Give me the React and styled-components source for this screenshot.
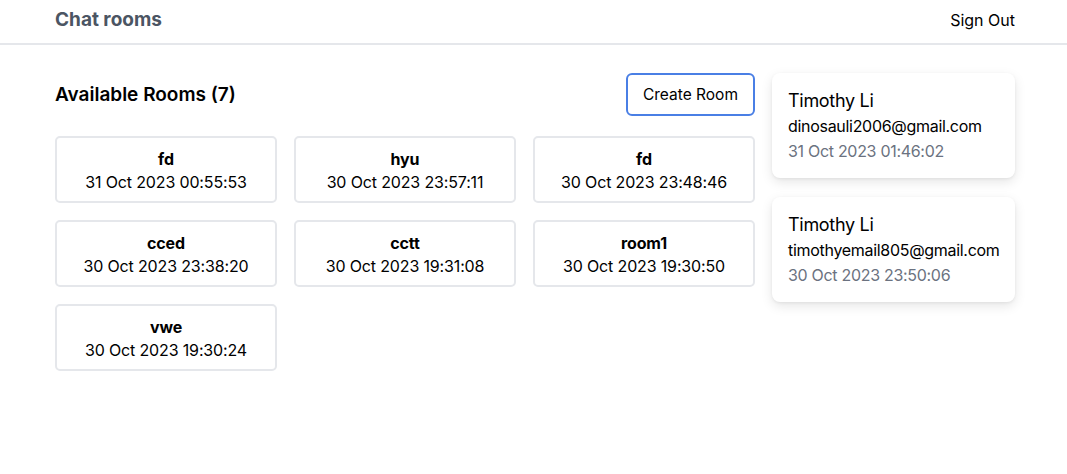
import React from "react";
import styled, { createGlobalStyle } from "styled-components";

const rooms = [
  { name: "fd", date: "31 Oct 2023 00:55:53" },
  { name: "hyu", date: "30 Oct 2023 23:57:11" },
  { name: "fd", date: "30 Oct 2023 23:48:46" },
  { name: "cced", date: "30 Oct 2023 23:38:20" },
  { name: "cctt", date: "30 Oct 2023 19:31:08" },
  { name: "room1", date: "30 Oct 2023 19:30:50" },
  { name: "vwe", date: "30 Oct 2023 19:30:24" },
];

const users = [
  { name: "Timothy Li", email: "dinosauli2006@gmail.com", date: "31 Oct 2023 01:46:02" },
  { name: "Timothy Li", email: "timothyemail805@gmail.com", date: "30 Oct 2023 23:50:06" },
];

const App = () => {
  return (
    <>
      <GlobalStyle />
      <Header>
        <HeaderInner>
          <Brand>Chat rooms</Brand>
          <SignOut>Sign Out</SignOut>
        </HeaderInner>
      </Header>
      <Main>
        <RoomsColumn>
          <RoomsHeader>
            <Heading>Available Rooms ({rooms.length})</Heading>
            <CreateButton>Create Room</CreateButton>
          </RoomsHeader>
          <RoomGrid>
            {rooms.map((room, index) => (
              <RoomCard key={index}>
                <RoomName>{room.name}</RoomName>
                <RoomDate>{room.date}</RoomDate>
              </RoomCard>
            ))}
          </RoomGrid>
        </RoomsColumn>
        <UsersColumn>
          {users.map((user, index) => (
            <UserCard key={index}>
              <UserName>{user.name}</UserName>
              <UserEmail>{user.email}</UserEmail>
              <UserDate>{user.date}</UserDate>
            </UserCard>
          ))}
        </UsersColumn>
      </Main>
    </>
  );
};

const GlobalStyle = createGlobalStyle`
  * { box-sizing: border-box; }
  body {
    margin: 0;
    background: #fff;
    color: #000;
    font-family: Inter, "Liberation Sans", sans-serif;
  }
`;

const Header = styled.header`
  height: 45px;
  border-bottom: 2px solid #e5e7eb;
`;

const HeaderInner = styled.div`
  height: 100%;
  display: flex;
  align-items: center;
  justify-content: space-between;
  padding: 0 52px 4px 55px;
`;

const Brand = styled.div`
  font-size: 19px;
  font-weight: 700;
  color: #4b5563;
`;

const SignOut = styled.button`
  border: none;
  background: none;
  padding: 0;
  font: inherit;
  font-size: 16px;
  color: #000;
  cursor: pointer;
`;

const Main = styled.main`
  display: flex;
  gap: 17px;
  padding: 28px 52px 0 55px;
`;

const RoomsColumn = styled.section`
  width: 700px;
`;

const RoomsHeader = styled.div`
  display: flex;
  align-items: center;
  justify-content: space-between;
  margin-bottom: 20px;
`;

const Heading = styled.h2`
  margin: 0;
  font-size: 19px;
  font-weight: 600;
`;

const CreateButton = styled.button`
  height: 43px;
  padding: 0 15px;
  border: 2px solid #4a7fe5;
  border-radius: 6px;
  background: #fff;
  font: inherit;
  font-size: 15.5px;
  color: #000;
  cursor: pointer;
`;

const RoomGrid = styled.div`
  display: grid;
  grid-template-columns: repeat(3, 1fr);
  gap: 17px;
`;

const RoomCard = styled.div`
  height: 67px;
  padding-top: 2px;
  border: 2px solid #e5e7eb;
  border-radius: 5px;
  display: flex;
  flex-direction: column;
  align-items: center;
  justify-content: center;
  gap: 3px;
  font-size: 16px;
  letter-spacing: -0.15px;
`;

const RoomName = styled.div`
  font-weight: 700;
`;

const RoomDate = styled.div``;

const UsersColumn = styled.aside`
  width: 243px;
  display: flex;
  flex-direction: column;
  gap: 19px;
`;

const UserCard = styled.div`
  height: 105px;
  padding: 17px 16px 0;
  border-radius: 8px;
  background: #fff;
  box-shadow: 0 4px 12px rgba(0, 0, 0, 0.1), 0 1px 3px rgba(0, 0, 0, 0.06);
  display: flex;
  flex-direction: column;
  gap: 5px;
  letter-spacing: -0.3px;
`;

const UserName = styled.div`
  font-size: 18px;
`;

const UserEmail = styled.div`
  font-size: 16px;
`;

const UserDate = styled.div`
  font-size: 16px;
  color: #6b7280;
`;

export default App;
